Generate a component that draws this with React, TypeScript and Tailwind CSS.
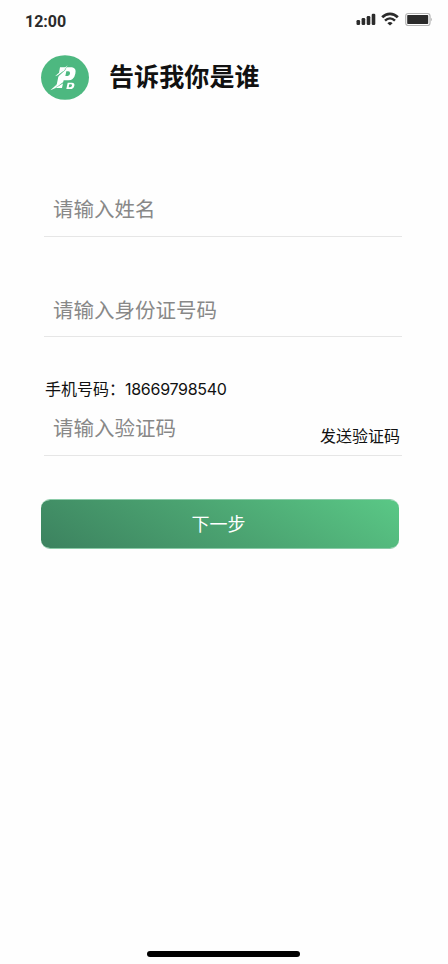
import React from 'react';

interface FieldProps {
  placeholder: string;
  className?: string;
  children?: React.ReactNode;
}

const Field: React.FC<FieldProps> = ({ placeholder, className = '', children }) => {
  return (
    <div className={`ml-[3px] flex h-[43px] w-[358px] items-center justify-between border-b border-[#e6e6e6] ${className}`}>
      <input
        type="text"
        placeholder={placeholder}
        className="h-[30px] w-[240px] bg-transparent pl-[9px] text-[20.5px] leading-[30px] outline-none placeholder:text-[#888888]"
      />
      {children}
    </div>
  );
};

const StatusBar: React.FC = () => {
  return (
    <div className="flex h-[55px] items-start justify-between pl-[25px] pr-[15px]">
      <span className="mt-[10px] font-['Roboto'] text-[16px] font-bold leading-[24px] text-[#2b2b2b]">12:00</span>
      <div className="mt-[12px] flex h-[16px] items-start">
        <svg width="20" height="16" viewBox="0 0 20 16" fill="#2b2b2b">
          <rect x="0.5" y="8" width="3.6" height="5" rx="1.2" />
          <rect x="5.6" y="6" width="3.6" height="7" rx="1.2" />
          <rect x="10.7" y="4" width="3.6" height="9" rx="1.2" />
          <rect x="15.7" y="1.7" width="3.6" height="11.3" rx="1.2" />
        </svg>
        <svg className="ml-[5px]" width="18" height="16" viewBox="0 0 18 16" fill="none" stroke="#2b2b2b">
          <path d="M1.2 5.3C5.7 .6 12.3 .6 16.8 5.3" strokeWidth="2.7" />
          <path d="M4 8.6C7 5.7 11 5.7 14 8.6" strokeWidth="2.5" />
          <path d="M6.4 11.2Q9 9 11.6 11.2L9 13.6Z" fill="#2b2b2b" stroke="none" />
        </svg>
        <svg className="ml-[6px]" width="28" height="16" viewBox="0 0 28 16">
          <rect x="0.7" y="1.5" width="24.3" height="12" rx="2.5" fill="#fff" stroke="#b5b5b5" strokeWidth="1.2" />
          <rect x="2.2" y="3" width="21" height="9" rx="0.8" fill="#2b2b2b" />
          <path d="M25.8 5.5Q28 7.5 25.8 9.5Z" fill="#b5b5b5" />
        </svg>
      </div>
    </div>
  );
};

const Logo: React.FC = () => {
  return (
    <svg width="48" height="45" viewBox="0 0 144 135">
      <ellipse cx="72" cy="67.5" rx="72" ry="67" fill="#4db880" />
      {/* letter P, then the streaks that cut across it */}
      <path
        d="M57 37H93Q107 39 103 56Q99 75 82 76H68L63 99H45L52 65ZM76 49L73 63H80Q86 62 87 56Q88 49 82 49Z"
        fill="#fff"
        fillRule="evenodd"
      />
      <path d="M38 69L78 34L73 45L46 70Z" fill="#4db880" />
      <path d="M42 64L80 31L70 46L50 61Z" fill="#fff" />
      <path d="M28 106L48 88L46 98Z" fill="#fff" />
      <path d="M38 103L70 79L68 84Z" fill="#4db880" />
      <path
        d="M80 83H93Q102 84 100 92Q98 102 87 102H76ZM85 88L83 97H87Q92 96 93 92Q93 88 90 88Z"
        fill="#fff"
        fillRule="evenodd"
      />
    </svg>
  );
};

export default function App() {
  return (
    <div className="flex h-[964px] w-[448px] flex-col overflow-hidden bg-[#fefefe] font-['Liberation_Sans','Noto_Sans_CJK_SC',sans-serif]">
      <StatusBar />

      <main className="flex flex-1 flex-col pl-[41px]">
        <header className="flex h-[45px] items-center gap-[20px]">
          <Logo />
          <h1 className="pb-[1px] text-[25.1px] font-bold leading-[36px] text-[#111111]">告诉我你是谁</h1>
        </header>

        <Field placeholder="请输入姓名" className="mt-[94px] pb-[10px]" />
        <Field placeholder="请输入身份证号码" className="mt-[57px] pb-[8px]" />

        <p className="ml-[4px] mt-[40px] h-[24px] text-[16px] leading-[24px] text-[#111111]">
          手机号码：<span className="font-['Inter'] tracking-[-0.28px]">18669798540</span>
        </p>
        <Field placeholder="请输入验证码" className="mt-[12px] pb-[10px]">
          <button className="relative top-[8px] mr-[2px] text-[16px] leading-[24px] text-[#111111]">发送验证码</button>
        </Field>

        <button className="mt-[43px] h-[50px] w-[358px] rounded-[9px] border-y border-[#8bcba8] bg-[linear-gradient(30deg,#3c825f,#4ba371_50%,#5ac886)] bg-clip-padding pr-[3px] pt-[2px] text-[18px] leading-[26px] text-white">
          下一步
        </button>
      </main>

      <div className="mx-auto mb-[7px] ml-[147px] h-[6px] w-[153px] rounded-full bg-black" />
    </div>
  );
}
